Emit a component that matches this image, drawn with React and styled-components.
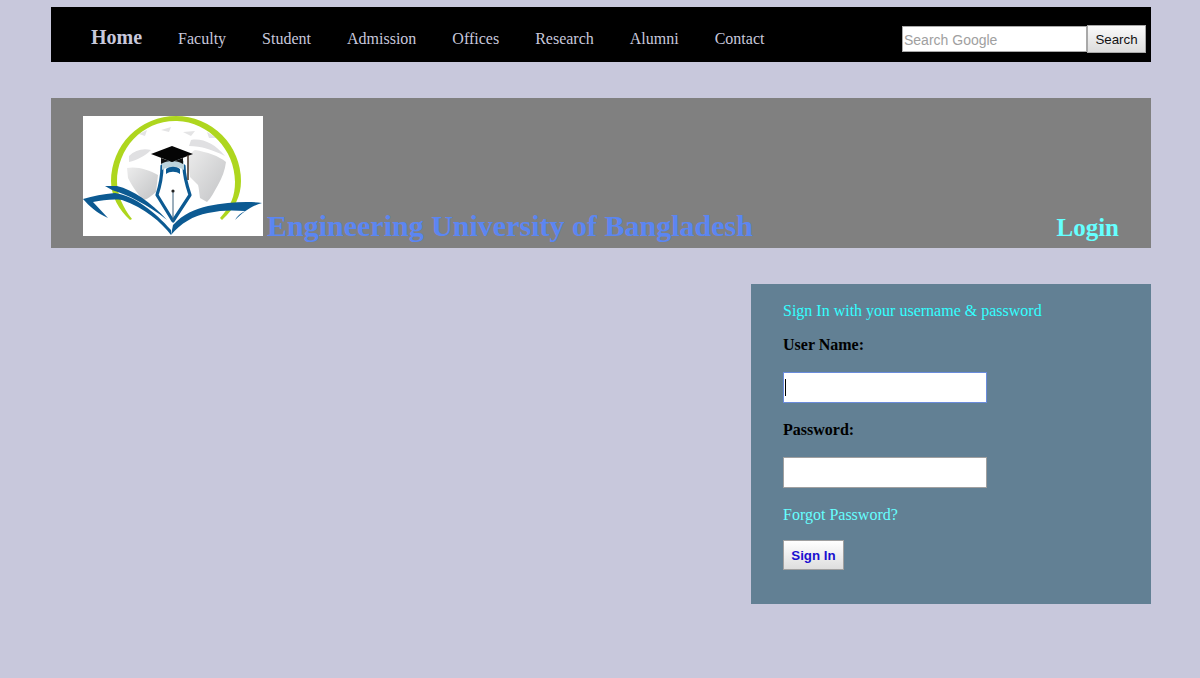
import React from "react";
import styled, { createGlobalStyle } from "styled-components";

const GlobalStyle = createGlobalStyle`
  html, body {
    margin: 0;
    background: #c8c8dc;
  }
  body {
    font-family: "Liberation Serif", "Times New Roman", serif;
    min-height: 678px;
  }
`;

const navItems = ["Faculty", "Student", "Admission", "Offices", "Research", "Alumni", "Contact"];

const Logo = () => (
  <LogoSvg viewBox="0 0 180 120" width="180" height="120" aria-label="logo">
    <defs>
      <linearGradient id="land" x1="0" y1="0" x2="1" y2="1">
        <stop offset="0" stopColor="#ececec" />
        <stop offset="1" stopColor="#c2c3c5" />
      </linearGradient>
    </defs>
    <rect width="180" height="120" fill="#fff" />
    {/* globe */}
    <path d="M44 52 C54 50 66 54 75 59 L73 76 C68 80 64 84 60 84 C55 78 50 72 45 62 Z" fill="url(#land)" />
    <path d="M105 46 C106 40 108 36 112 34 C124 36 136 40 143 46 C142 54 139 62 135 69 C131 76 128 82 124 86 L117 82 C116 76 116 72 115 69 L107 61 Z" fill="url(#land)" />
    <path d="M46 40 C52 34 60 32 68 34 C62 40 54 44 46 46 Z M108 24 C120 22 132 28 142 40 C130 34 118 30 106 30 Z" fill="#e0e0e2" />
    <path d="M78 14 L88 11 L86 16 Z M100 16 L112 15 L108 20 Z M56 18 L64 14 L62 20 Z M124 16 L134 22 L126 22 Z" fill="#e4e4e5" />
    {/* green ring */}
    <path
      d="M28 65 A65 65 0 0 1 158 65 C158 80 152 92 139 104 L137 102 C148 90 152 80 152 66 C152 34 126 6 94 5 C60 4 34 32 34 66 C34 78 40 92 49 103 L47 104 C36 94 28 80 28 65 Z"
      fill="#aed61e"
    />
    {/* book */}
    <path d="M22 70 L34 70 C50 74 68 86 84 104 C74 96 65 90 55 85 C46 80 38 77 29 74 Z" fill="#0c5a92" />
    <path d="M0 83 C10 80 20 78 32 77 C52 80 72 96 88 114 L88 119 C78 106 62 92 39 84 C30 83 20 84 10 86 L25 102 C14 97 6 90 0 83 Z" fill="#0c5a92" />
    <path d="M88 119 L90 109 C100 98 112 93 125 90 C145 86 165 85 179 87 C170 89 160 96 152 104 C154 100 158 97 162 95 C150 94 138 94 125 97 C110 100 98 107 88 119 Z" fill="#0c5a92" />
    {/* pen nib */}
    <path d="M79 50 C84 46 96 46 101 50 C101 60 104 70 107 79 L90 105 L74 79 C77 70 79 60 79 50 Z" fill="#fff" stroke="#0c5a92" strokeWidth="3.2" strokeLinejoin="round" />
    <path d="M79 45 C84 42 96 42 101 45 L101 54 C96 50 84 50 79 54 Z" fill="#bcd3dc" />
    <path d="M83 53 C87 50 93 50 97 53 L97 58 C93 55 87 55 83 58 Z" fill="#0c5a92" />
    <path d="M90 74 L90 104" stroke="#3a5f7a" strokeWidth="1" />
    <circle cx="90" cy="75" r="1.6" fill="#222" />
    {/* cap */}
    <path d="M68 38 L89 30 L110 38 L89 46 Z" fill="#050505" />
    <path d="M78 42 L78 48 C84 44 94 44 100 48 L100 42 L89 46 Z" fill="#111" />
    <path d="M105 39 L105 64" stroke="#4a3a30" strokeWidth="1.6" />
  </LogoSvg>
);

export default function App() {
  return (
    <>
      <GlobalStyle />
      <Page>
        <NavBar>
          <NavList>
            <HomeLink href="#">Home</HomeLink>
            {navItems.map((item) => (
              <NavLink href="#" key={item}>{item}</NavLink>
            ))}
          </NavList>
          <SearchForm>
            <SearchInput placeholder="Search Google" readOnly />
            <SearchButton type="button">Search</SearchButton>
          </SearchForm>
        </NavBar>

        <Banner>
          <Brand>
            <Logo />
            <Title>Engineering University of Bangladesh</Title>
          </Brand>
          <LoginHeading>Login</LoginHeading>
        </Banner>

        <Content>
          <LoginPanel>
            <PanelIntro>Sign In with your username &amp; password</PanelIntro>
            <FieldLabel>User Name:</FieldLabel>
            <InputWrap>
              <TextField $focused readOnly />
              <Caret />
            </InputWrap>
            <FieldLabel>Password:</FieldLabel>
            <InputWrap>
              <TextField type="password" readOnly />
            </InputWrap>
            <ForgotLink href="#">Forgot Password?</ForgotLink>
            <SignInButton type="button">Sign In</SignInButton>
          </LoginPanel>
        </Content>
      </Page>
    </>
  );
}

const Page = styled.div`
  width: 1100px;
  padding: 7px 0 0 51px;
`;

const NavBar = styled.nav`
  height: 55px;
  box-sizing: border-box;
  padding: 7px 5px 0 40px;
  background: #000;
  display: flex;
  align-items: center;
  justify-content: space-between;
  margin-bottom: 36px;
`;

const NavList = styled.div`
  display: flex;
  align-items: baseline;
  gap: 36px;
  margin-top: -2px;
`;

const NavLink = styled.a`
  color: #c8c8dc;
  font-size: 16px;
  text-decoration: none;
`;

const HomeLink = styled(NavLink)`
  font-size: 20px;
  font-weight: bold;
`;

const SearchForm = styled.form`
  display: flex;
  align-items: center;
  margin: 2px 0 0;
`;

const SearchInput = styled.input`
  box-sizing: border-box;
  width: 185px;
  height: 26px;
  padding: 1px 1px 0;
  border: 1px solid #a9a9a9;
  border-radius: 0;
  background: #fff;
  font-family: "Liberation Sans", Arial, sans-serif;
  font-size: 14px;
  outline: none;
  &::placeholder {
    color: #a0a0a0;
    opacity: 1;
  }
`;

const SearchButton = styled.button`
  box-sizing: border-box;
  width: 59px;
  height: 28px;
  padding: 0;
  border: 1px solid #a8a8a8;
  border-radius: 0;
  background: linear-gradient(#fafafa, #dcdcdc);
  color: #111;
  font-family: "Liberation Sans", Arial, sans-serif;
  font-size: 13.33px;
`;

const Banner = styled.header`
  height: 150px;
  box-sizing: border-box;
  padding: 18px 32px 0;
  background: #808080;
  display: flex;
  justify-content: space-between;
  align-items: flex-start;
  margin-bottom: 36px;
`;

const Brand = styled.div`
  display: flex;
  align-items: flex-end;
`;

const LogoSvg = styled.svg`
  display: block;
  flex: none;
`;

const Title = styled.h1`
  margin: 0 0 -7px 4px;
  color: #5b86f2;
  font-size: 30px;
  line-height: 34px;
  font-weight: bold;
  white-space: nowrap;
`;

const LoginHeading = styled.h2`
  margin: 95px 0 0;
  color: #66ffff;
  font-size: 25px;
  line-height: 34px;
  font-weight: bold;
`;

const Content = styled.main`
  display: flex;
  justify-content: flex-end;
`;

const LoginPanel = styled.section`
  width: 400px;
  height: 320px;
  box-sizing: border-box;
  padding: 18px 32px 0;
  background: #628094;
  display: flex;
  flex-direction: column;
  align-items: flex-start;
`;

const PanelIntro = styled.p`
  margin: 0 0 16px;
  color: #33ffff;
  font-size: 16px;
  line-height: 18px;
`;

const FieldLabel = styled.label`
  margin-bottom: 18px;
  color: #000;
  font-size: 16px;
  line-height: 18px;
  font-weight: bold;
`;

const InputWrap = styled.div`
  position: relative;
  margin-bottom: 18px;
`;

const TextField = styled.input`
  display: block;
  box-sizing: border-box;
  width: 204px;
  height: 31px;
  border: 1px solid ${(p) => (p.$focused ? "#6a8cdc" : "#a0a0a0")};
  border-radius: 0;
  background: #fff;
  outline: none;
`;

const Caret = styled.span`
  position: absolute;
  left: 2px;
  top: 7px;
  width: 1px;
  height: 17px;
  background: #000;
`;

const ForgotLink = styled.a`
  margin-bottom: 16px;
  color: #66ffff;
  font-size: 16px;
  line-height: 18px;
  text-decoration: none;
`;

const SignInButton = styled.button`
  box-sizing: border-box;
  width: 61px;
  height: 30px;
  padding: 0;
  border: 1px solid #a0a0a0;
  border-radius: 0;
  background: linear-gradient(#ffffff, #dedede);
  color: #1a10d0;
  font-family: "Liberation Sans", Arial, sans-serif;
  font-size: 13.33px;
  font-weight: bold;
`;
